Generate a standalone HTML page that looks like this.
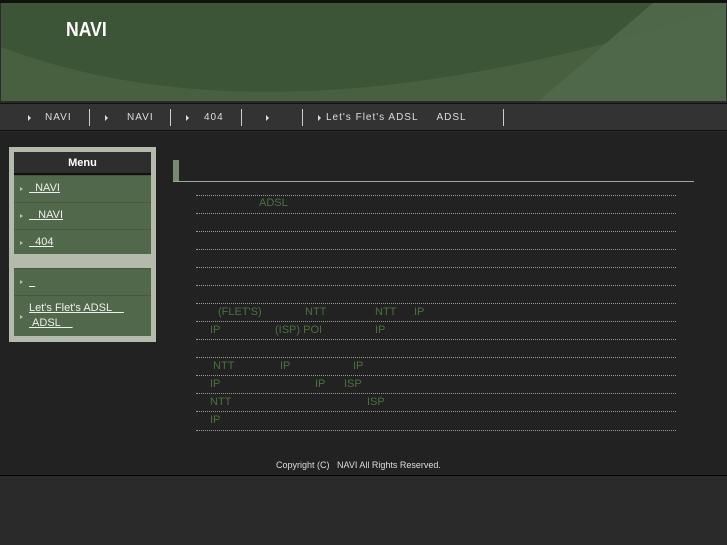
<!DOCTYPE html>
<html><head><meta charset="utf-8"><style>
*{margin:0;padding:0;box-sizing:border-box}
body{width:727px;height:545px;background:#2a2a2a;font-family:"Liberation Sans","Noto Sans CJK JP",sans-serif;position:relative;overflow:hidden}
.abs{position:absolute}
#top{left:0;top:0;width:727px;height:3px;background:#111}
#hdr{left:1px;top:3px;width:725px;height:98px;background:#3c5536;overflow:hidden}
#nav{left:0;top:103px;width:727px;height:28px;background:#333;border-top:1px solid #111;border-bottom:1px solid #111}
.nv{position:absolute;top:8px;color:#ddd;font-size:10px;letter-spacing:1px}
.sep{position:absolute;top:5px;width:1px;height:17px;background:#ccc}
.tri{position:absolute;top:11px;width:0;height:0;border-left:3px solid #ddd;border-top:3px solid transparent;border-bottom:3px solid transparent}
#main{left:0;top:132px;width:727px;height:344px;background:#222;border-bottom:1px solid #000}
#side{left:9px;top:147px;width:147px;height:195px;background:#b4bbac}
.it{position:absolute;left:5px;width:137px;background:#52684a;border-top:1px solid #46593f;color:#eee;font-size:11px}
.it span{text-decoration:underline}
.it i{position:absolute;left:6px;top:11px;border-left:3px solid #b9c4b0;border-top:2px solid transparent;border-bottom:2px solid transparent}
.dl{position:absolute;left:196px;width:480px;border-top:1px dotted #999;height:0}
.g{position:absolute;color:#4c7040;font-size:11px}
</style></head><body>
<div id="top" class="abs"></div>
<div id="hdr" class="abs">
<svg width="725" height="98" style="position:absolute;left:0;top:0">
<path d="M0 44 Q280 150 725 5 L725 98 L0 98Z" fill="#48603f"/>
<path d="M652 0 L725 0 L725 98 L538 98 Q605 40 652 0Z" fill="#50694a" opacity="0.9"/>
</svg>
<div class="abs" style="left:65px;top:16px;color:#fff;font-size:20px;font-weight:bold;transform:scaleX(0.88);transform-origin:left">NAVI</div>
</div>
<div id="nav" class="abs">
<i class="tri" style="left:28px"></i><span class="nv" style="left:45px">NAVI</span><i class="sep" style="left:89px"></i>
<i class="tri" style="left:105px"></i><span class="nv" style="left:127px">NAVI</span><i class="sep" style="left:170px"></i>
<i class="tri" style="left:186px"></i><span class="nv" style="left:204px">404</span><i class="sep" style="left:241px"></i>
<i class="tri" style="left:266px"></i><i class="sep" style="left:302px"></i>
<i class="tri" style="left:318px"></i><span class="nv" style="left:326px">Let's Flet's ADSL &nbsp; &nbsp; ADSL</span><i class="sep" style="left:503px"></i>
</div>
<div id="main" class="abs"></div>
<div id="side" class="abs">
<div class="abs" style="left:5px;top:5px;width:137px;height:23px;background:#2e2e2e;color:#fff;font-size:11px;font-weight:bold;text-align:center;line-height:22px;border-bottom:2px solid #111">Menu</div>
<div class="it" style="top:28px;height:27px;line-height:24px"><i></i><span style="margin-left:15px">&nbsp; NAVI</span></div>
<div class="it" style="top:55px;height:27px;line-height:24px"><i></i><span style="margin-left:15px">&nbsp;&nbsp; NAVI</span></div>
<div class="it" style="top:82px;height:25px;line-height:24px"><i></i><span style="margin-left:15px">&nbsp; 404</span></div>
<div class="it" style="top:121px;height:27px;line-height:26px"><i></i><span style="margin-left:15px">&nbsp;&nbsp;</span></div>
<div class="it" style="top:148px;height:41px;line-height:15px;padding-top:5px;padding-left:15px"><i style="top:19px"></i><span>Let's Flet's ADSL &nbsp;&nbsp;&nbsp;</span><br><span>&nbsp;ADSL &nbsp;&nbsp;&nbsp;</span></div>
</div>
<div class="abs" style="left:173px;top:160px;width:6px;height:22px;background:#788a70"></div>
<div class="abs" style="left:173px;top:181px;width:521px;height:1px;background:#a0a89a"></div>
<div class="dl" style="top:195px"></div><div class="dl" style="top:213px"></div><div class="dl" style="top:231px"></div><div class="dl" style="top:249px"></div><div class="dl" style="top:267px"></div><div class="dl" style="top:285px"></div><div class="dl" style="top:303px"></div><div class="dl" style="top:321px"></div><div class="dl" style="top:339px"></div><div class="dl" style="top:357px"></div><div class="dl" style="top:375px"></div><div class="dl" style="top:393px"></div><div class="dl" style="top:411px"></div><div class="dl" style="top:430px"></div>
<span class="g" style="left:259px;top:197px">ADSL</span>
<span class="g" style="left:218px;top:306px">(FLET'S)</span><span class="g" style="left:305px;top:306px">NTT</span><span class="g" style="left:375px;top:306px">NTT</span><span class="g" style="left:414px;top:306px">IP</span>
<span class="g" style="left:210px;top:324px">IP</span><span class="g" style="left:275px;top:324px">(ISP) POI</span><span class="g" style="left:375px;top:324px">IP</span>
<span class="g" style="left:213px;top:360px">NTT</span><span class="g" style="left:280px;top:360px">IP</span><span class="g" style="left:353px;top:360px">IP</span>
<span class="g" style="left:210px;top:378px">IP</span><span class="g" style="left:315px;top:378px">IP</span><span class="g" style="left:344px;top:378px">ISP</span>
<span class="g" style="left:210px;top:396px">NTT</span><span class="g" style="left:367px;top:396px">ISP</span>
<span class="g" style="left:210px;top:414px">IP</span>
<div class="abs" style="left:276px;top:460px;color:#ddd;font-size:9px">Copyright (C) &nbsp; NAVI All Rights Reserved.</div>
</body></html>
